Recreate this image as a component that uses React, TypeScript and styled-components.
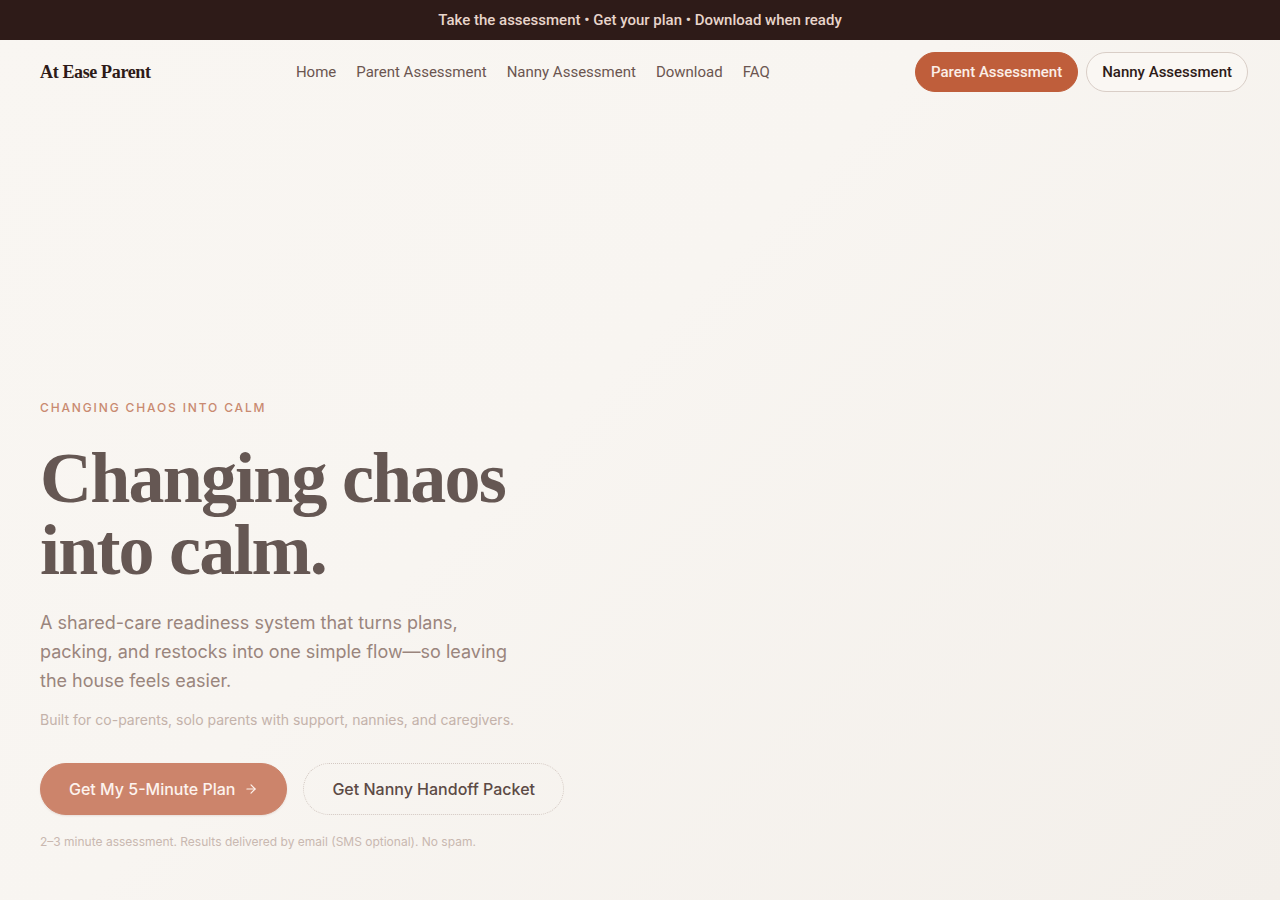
import React from "react";
import styled, { createGlobalStyle } from "styled-components";
import { ArrowRight } from "lucide-react";

const GlobalStyle = createGlobalStyle`
  * {
    box-sizing: border-box;
  }
  html, body {
    margin: 0;
    padding: 0;
  }
  body {
    min-height: 100vh;
    background: linear-gradient(135deg, #f9f6f2 0%, #f8f5f1 45%, #f3efea 100%);
    font-family: "Inter", "Noto Sans", sans-serif;
    color: #2e1b18;
  }
`;

const navLinks = ["Home", "Parent Assessment", "Nanny Assessment", "Download", "FAQ"];

const App: React.FC = () => {
  return (
    <>
      <GlobalStyle />
      <Page>
        <Announcement>Take the assessment • Get your plan • Download when ready</Announcement>

        <Header>
          <Logo>At Ease Parent</Logo>
          <Nav>
            {navLinks.map((link) => (
              <NavLink key={link} href="#">
                {link}
              </NavLink>
            ))}
          </Nav>
          <HeaderActions>
            <PillButton $variant="solid">Parent Assessment</PillButton>
            <PillButton $variant="outline">Nanny Assessment</PillButton>
          </HeaderActions>
        </Header>

        <Hero>
          <Eyebrow>Changing chaos into calm</Eyebrow>
          <Headline>
            Changing chaos
            <br />
            into calm.
          </Headline>
          <Lead>
            A shared-care readiness system that turns plans, packing, and restocks into one simple
            flow—so leaving the house feels easier.
          </Lead>
          <Audience>Built for co-parents, solo parents with support, nannies, and caregivers.</Audience>
          <CtaRow>
            <CtaButton $primary>
              Get My 5-Minute Plan
              <ArrowRight size={14} strokeWidth={2} />
            </CtaButton>
            <CtaButton>Get Nanny Handoff Packet</CtaButton>
          </CtaRow>
          <FinePrint>
            2–3 minute assessment. Results delivered by email (SMS optional). No spam.
          </FinePrint>
        </Hero>
      </Page>
    </>
  );
};

const Page = styled.div`
  min-height: 100vh;
  display: flex;
  flex-direction: column;
`;

const Announcement = styled.div`
  height: 40px;
  display: flex;
  align-items: center;
  justify-content: center;
  background: #2e1b18;
  color: #e8d5cb;
  font-family: "Roboto", "Liberation Sans", sans-serif;
  font-size: 15px;
  font-weight: 500;
`;

const Header = styled.header`
  height: 64px;
  padding: 0 32px 0 40px;
  display: flex;
  align-items: center;
  justify-content: space-between;
`;

const Logo = styled.div`
  font-family: "Liberation Serif", "Times New Roman", serif;
  font-weight: 700;
  font-size: 18px;
  letter-spacing: -0.02em;
  color: #2e1b18;
`;

const Nav = styled.nav`
  display: flex;
  align-items: center;
  gap: 20px;
`;

const NavLink = styled.a`
  font-family: "Roboto", "Liberation Sans", sans-serif;
  font-size: 15px;
  font-weight: 400;
  color: #6b5550;
  text-decoration: none;
`;

const HeaderActions = styled.div`
  display: flex;
  align-items: center;
  gap: 8px;
`;

const PillButton = styled.button<{ $variant: "solid" | "outline" }>`
  height: 40px;
  padding: 0 15px;
  border-radius: 999px;
  font-family: "Roboto", "Liberation Sans", sans-serif;
  font-size: 15px;
  font-weight: 500;
  cursor: pointer;
  background: ${({ $variant }) => ($variant === "solid" ? "#bf5e3b" : "#faf7f3")};
  color: ${({ $variant }) => ($variant === "solid" ? "#fbeee8" : "#2e1b18")};
  border: 1px solid ${({ $variant }) => ($variant === "solid" ? "#bf5e3b" : "#d9cec7")};
`;

const Hero = styled.main`
  padding: 296px 40px 48px;
  display: flex;
  flex-direction: column;
  align-items: flex-start;
`;

const Eyebrow = styled.p`
  margin: 0 0 26px;
  font-size: 12px;
  line-height: 16px;
  font-weight: 500;
  letter-spacing: 0.155em;
  text-transform: uppercase;
  color: #c98a70;
`;

const Headline = styled.h1`
  margin: 0 0 22px;
  font-family: "Liberation Serif", "Times New Roman", serif;
  font-weight: 700;
  font-size: 72px;
  line-height: 72px;
  letter-spacing: -0.025em;
  color: #655753;
`;

const Lead = styled.p`
  margin: 0 0 15px;
  max-width: 480px;
  font-size: 18px;
  line-height: 29px;
  color: #9a857d;
`;

const Audience = styled.p`
  margin: 0 0 33px;
  font-size: 14px;
  line-height: 20px;
  color: #c4b2aa;
`;

const CtaRow = styled.div`
  display: flex;
  gap: 16px;
  margin-bottom: 19px;
`;

const CtaButton = styled.button<{ $primary?: boolean }>`
  height: 52px;
  padding: 0 28px;
  display: inline-flex;
  align-items: center;
  gap: 9px;
  border-radius: 999px;
  font-family: "Inter", "Noto Sans", sans-serif;
  font-size: 16px;
  font-weight: 500;
  cursor: pointer;
  background: ${({ $primary }) => ($primary ? "#cc846b" : "transparent")};
  color: ${({ $primary }) => ($primary ? "#fdf3ee" : "#5c4a45")};
  border: 1px ${({ $primary }) => ($primary ? "solid #cc846b" : "dotted #d3c8c2")};
  box-shadow: ${({ $primary }) => ($primary ? "0 1px 2px rgba(120, 60, 40, 0.12)" : "none")};
`;

const FinePrint = styled.p`
  margin: 0;
  font-size: 12px;
  line-height: 16px;
  color: #c9b8b0;
`;

export default App;
